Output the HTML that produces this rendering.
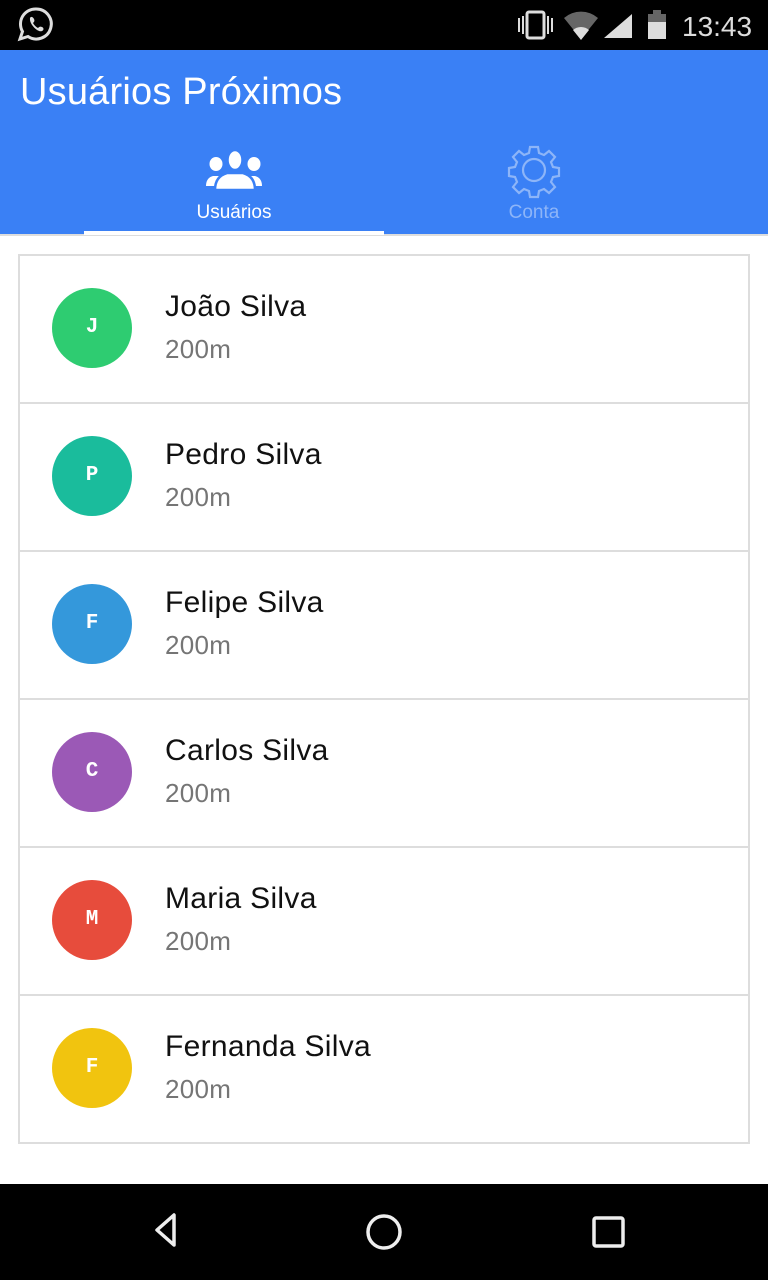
<!DOCTYPE html>
<html><head><meta charset="utf-8"><style>
*{margin:0;padding:0;box-sizing:border-box}
body{width:768px;height:1280px;background:#fff;font-family:"Liberation Sans",sans-serif;position:relative;overflow:hidden}
.sb{position:absolute;left:0;top:0;width:768px;height:50px;background:#000}
.hd{position:absolute;left:0;top:50px;width:768px;height:184px;background:#3a80f5}
.title{position:absolute;left:20px;top:71px;color:#fff;font-size:38px;letter-spacing:0.2px}
.tab{position:absolute;top:202px;font-size:19px;width:300px;text-align:center}
.line{position:absolute;left:0;top:234px;width:768px;height:2px;background:#ddd}
.ind{position:absolute;left:84px;top:231px;width:300px;height:4px;background:#fff}
.card{position:absolute;left:18px;top:254px;width:732px;height:890px;border:2px solid #ddd}
.row{position:absolute;left:0;width:728px;height:148px;border-bottom:2px solid #ddd}
.av{position:absolute;left:32px;top:32px;width:80px;height:80px;border-radius:50%;color:#fff;font-family:"Liberation Mono",monospace;font-weight:bold;font-size:21px;line-height:80px;text-align:center}
.nm{position:absolute;left:145px;top:34px;font-size:30px;color:#111;letter-spacing:0.3px}
.ds{position:absolute;left:145px;top:78px;font-size:26px;color:#757575;letter-spacing:0.3px}
.nav{position:absolute;left:0;top:1184px;width:768px;height:96px;background:#000}
</style></head><body>
<div class="sb">
<svg width="768" height="50" style="position:absolute;left:0;top:0">
<path d="M36 9a15 15 0 1 1-8 27.5l-8 2.5 2.5-7.5A15 15 0 0 1 36 9z" fill="none" stroke="#ddd" stroke-width="3"/>
<path d="M30 18c1-2 3-1 4 1s0 3-1 4c1 2 3 4 5 5 1-1 2-2 4-1s2 3 0 4c-4 2-13-7-12-13z" fill="#ddd"/>
<rect x="527" y="12" width="17" height="26" rx="2" fill="none" stroke="#ddd" stroke-width="3"/>
<rect x="518" y="18" width="2" height="14" fill="#ddd"/><rect x="522" y="16" width="2" height="18" fill="#ddd"/>
<rect x="547" y="16" width="2" height="18" fill="#ddd"/><rect x="551" y="18" width="2" height="14" fill="#ddd"/>
<path d="M564 18a26 26 0 0 1 34 0l-17 21z" fill="#666"/><path d="M573 30l8 10 8-10a12 12 0 0 0-16 0z" fill="#ddd"/>
<path d="M632 14v24h-28z" fill="#ddd"/>
<rect x="648" y="14" width="18" height="25" fill="#ddd"/><rect x="648" y="14" width="18" height="8" fill="#666"/><rect x="653" y="10" width="8" height="4" fill="#666"/>
<text x="682" y="36" font-family="Liberation Sans" font-size="28" fill="#ddd">13:43</text>
</svg></div>
<div class="hd"></div>
<div class="title">Usuários Próximos</div>
<svg width="768" height="60" style="position:absolute;left:0;top:140px">
<g fill="#fff">
<ellipse cx="216" cy="24" rx="6.5" ry="7"/><path d="M206 46c0-6 3-9 7-10h7c4 1 6 4 6 10z"/>
<ellipse cx="254" cy="24" rx="6.5" ry="7"/><path d="M262 46c0-6-3-9-7-10h-7c-4 1-6 4-6 10z"/>
<g stroke="#3a80f5" stroke-width="2.5"><ellipse cx="235" cy="20" rx="7.5" ry="10"/><path d="M215 50c0-10 5-15 12-17h16c7 2 12 7 12 17z"/></g>
</g>
<g fill="none" stroke="#8db5f8" stroke-width="2.2">
<circle cx="534" cy="30" r="11"/>
<path d="M530 7h8l1 6 5 2 5-4 6 6-4 5 2 5 6 1v8l-6 1-2 5 4 5-6 6-5-4-5 2-1 6h-8l-1-6-5-2-5 4-6-6 4-5-2-5-6-1v-8l6-1 2-5-4-5 6-6 5 4 5-2z"/>
</g></svg>
<div class="tab" style="left:84px;color:#fff">Usuários</div>
<div class="tab" style="left:384px;color:#8db5f8">Conta</div>
<div class="line"></div><div class="ind"></div>
<div class="card">
<div class="row" style="top:0"><div class="av" style="background:#2ecc71">J</div><div class="nm">João Silva</div><div class="ds">200m</div></div>
<div class="row" style="top:148px"><div class="av" style="background:#1abc9c">P</div><div class="nm">Pedro Silva</div><div class="ds">200m</div></div>
<div class="row" style="top:296px"><div class="av" style="background:#3498db">F</div><div class="nm">Felipe Silva</div><div class="ds">200m</div></div>
<div class="row" style="top:444px"><div class="av" style="background:#9b59b6">C</div><div class="nm">Carlos Silva</div><div class="ds">200m</div></div>
<div class="row" style="top:592px"><div class="av" style="background:#e74c3c">M</div><div class="nm">Maria Silva</div><div class="ds">200m</div></div>
<div class="row" style="top:740px;border-bottom:none"><div class="av" style="background:#f1c40f">F</div><div class="nm">Fernanda Silva</div><div class="ds">200m</div></div>
</div>
<div class="nav"><svg width="768" height="96">
<path d="M174 31v30l-17-15z" fill="none" stroke="#eee" stroke-width="3.5" stroke-linejoin="round"/>
<circle cx="384" cy="48" r="16" fill="none" stroke="#eee" stroke-width="3.5"/>
<rect x="594" y="34" width="29" height="28" rx="2" fill="none" stroke="#eee" stroke-width="3.5"/>
</svg></div>
</body></html>
